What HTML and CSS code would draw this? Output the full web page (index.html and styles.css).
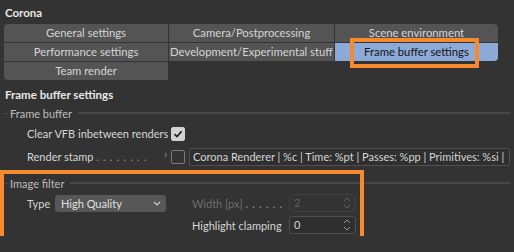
FILE: index.html
```html
<!DOCTYPE html>
<html lang="en">
<head>
  <meta charset="UTF-8" />
  <title>Corona</title>
  <link rel="stylesheet" href="styles.css">
</head>
<body>
  <div class="panel">
    <h3 class="title">Corona</h3>

    <div class="tabs">
      <div class="tab r-tl">General settings</div>
      <div class="tab">Camera/Postprocessing</div>
      <div class="tab r-tr">Scene environment</div>
      <div class="tab">Performance settings</div>
      <div class="tab">Development/Experimental stuff</div>
      <div class="tab active r-br">Frame buffer settings</div>
      <div class="tab r-bl">Team render</div>
    </div>

    <h3 class="section">Frame buffer settings</h3>

    <div class="group">
      <div class="legend"><span>Frame buffer</span></div>
      <div class="row">
        <span class="label">Clear VFB inbetween renders</span>
        <span class="check on">
          <svg viewBox="0 0 12 12" width="12" height="12"><path d="M2.5 6.2 L5 8.6 L9.6 3.2" fill="none" stroke="#1e1e1e" stroke-width="1.7"/></svg>
        </span>
      </div>
      <div class="row">
        <span class="label dots">Render stamp <span class="leader">. . . . . . . .</span></span>
        <span class="arrow">&#x203A;</span>
        <span class="check"></span>
        <span class="field stamp">Corona Renderer | %c | Time: %pt | Passes: %pp | Primitives: %si |</span>
      </div>
    </div>

    <div class="group highlight">
      <div class="legend"><span>Image filter</span></div>
      <div class="filter">
        <div class="col">
          <div class="row">
            <span class="label short">Type</span>
            <span class="select">High Quality
              <svg viewBox="0 0 8 5" width="8" height="5"><path d="M1 1 L4 4 L7 1" fill="none" stroke="#cfcfcf" stroke-width="1.2"/></svg>
            </span>
          </div>
        </div>
        <div class="col">
          <div class="row">
            <span class="label mid disabled">Width [px] <span class="leader">. . . . . .</span></span>
            <span class="field spin disabled">2
              <svg viewBox="0 0 8 12" width="8" height="12"><path d="M1 4 L4 1 L7 4 M1 8 L4 11 L7 8" fill="none" stroke="#666" stroke-width="1"/></svg>
            </span>
          </div>
          <div class="row">
            <span class="label mid">Highlight clamping</span>
            <span class="field spin">0
              <svg viewBox="0 0 8 12" width="8" height="12"><path d="M1 4 L4 1 L7 4 M1 8 L4 11 L7 8" fill="none" stroke="#9a9a9a" stroke-width="1"/></svg>
            </span>
          </div>
        </div>
      </div>
    </div>
  </div>
</body>
</html>
```

FILE: styles.css
```css
body {
  margin: 0;
  background: #333333;
  color: #d6d6d6;
  font-family: 'Lato', sans-serif;
  font-size: 11px;
  overflow: hidden;
}

.panel {
  padding: 4px 0 0 0;
}

.title,
.section {
  margin: 0;
  padding-left: 5px;
  font-size: 11.5px;
  font-weight: 700;
  color: #e8e8e8;
  line-height: 18px;
}

.tabs {
  margin: 2px 0 0 4px;
  width: 494px;
  display: grid;
  grid-template-columns: 164px 165px 163px;
  grid-auto-rows: 18px;
  gap: 1px;
  font-size: 11.3px;
}

.tab {
  background: #545454;
  color: #d4d4d4;
  text-align: center;
  line-height: 18px;
  white-space: nowrap;
}

.tab.active {
  background: #8da9d8;
  color: #161616;
  position: relative;
}

.tab.active::after {
  content: "";
  position: absolute;
  left: 15px;
  right: 19px;
  top: -5px;
  bottom: -7px;
  border: 4px solid #f7892e;
}

.r-tl { border-top-left-radius: 4px; }
.r-tr { border-top-right-radius: 4px; }
.r-br { border-bottom-right-radius: 4px; }
.r-bl { border-bottom-left-radius: 4px; }

.section {
  margin-top: 6px;
}

.group {
  padding: 0 4px 0 3px;
}

.legend {
  display: flex;
  align-items: center;
  height: 18px;
  color: #bdbdbd;
}

.legend::before {
  content: "";
  width: 5px;
  border-top: 1px solid #474747;
}

.legend::after {
  content: "";
  flex: 1;
  margin-left: 6px;
  border-top: 2px solid #474747;
}

.legend span {
  padding-left: 2px;
}

.row {
  display: flex;
  align-items: center;
  height: 23px;
  padding-left: 24px;
}

.label {
  width: 144px;
  flex: none;
  white-space: nowrap;
}

.leader {
  color: #9a9a9a;
  letter-spacing: 0.7px;
}

.arrow {
  margin-left: -7px;
  width: 7px;
  color: #9a9a9a;
  font-size: 11px;
  position: relative;
  top: -3px;
}

.check {
  width: 12px;
  height: 12px;
  border: 1px solid #7a7a7a;
  border-radius: 2px;
  display: inline-flex;
  align-items: center;
  justify-content: center;
}

.check.on {
  background: #d2d2d2;
  border-color: #d2d2d2;
}

.field {
  height: 16px;
  border: 1px solid #505050;
  border-radius: 3px;
  background: #2f2f2f;
  line-height: 16px;
  padding: 0 4px;
  color: #d6d6d6;
  white-space: nowrap;
  overflow: hidden;
}

.stamp {
  margin-left: 4px;
  flex: 1;
  padding: 0 3px;
}

.highlight {
  position: relative;
  margin-top: 6px;
}

.highlight::after {
  content: "";
  position: absolute;
  left: 0;
  width: 356px;
  top: -4px;
  height: 64px;
  border: 4px solid #f7892e;
  pointer-events: none;
}

.filter {
  display: flex;
}

.filter .col:first-child {
  width: 165px;
}

.filter .row {
  height: 22px;
}

.filter .col:last-child .row {
  padding-left: 24px;
}

.label.short {
  width: 28px;
}

.label.mid {
  width: 97px;
}

.select {
  width: 100px;
  height: 17px;
  padding: 0 5px 0 6px;
  background: #575757;
  border-radius: 3px;
  color: #e0e0e0;
  line-height: 17px;
  display: flex;
  align-items: center;
  justify-content: space-between;
}

.spin {
  width: 57px;
  height: 16px;
  display: flex;
  align-items: center;
  justify-content: space-between;
}

.disabled {
  color: #6e6e6e;
}

.field.disabled {
  background: #343434;
  border-color: #404040;
  color: #5e5e5e;
}
```
